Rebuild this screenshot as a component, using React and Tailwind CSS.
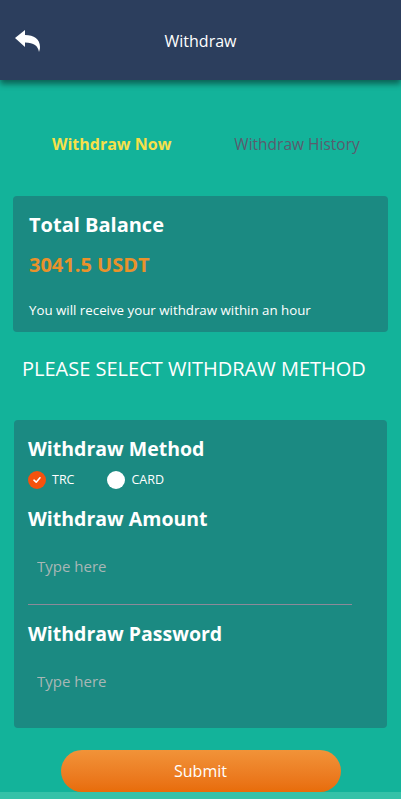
import React, { useState } from 'react';

const font = { fontFamily: '"Open Sans", "Noto Sans", sans-serif' };

function BackIcon() {
  return (
    <svg width="26" height="22" viewBox="0 0 26 22">
      <path d="M0 8 L10 0 L10 5 C19 5 25 9 25 17 C25 19 24.5 20.5 24 22 C23 16 19 12.5 10 12.5 L10 17 Z" fill="white" />
    </svg>
  );
}

function Radio({ checked }) {
  if (!checked) return <span className="w-[18px] h-[18px] rounded-full bg-white" />;
  return (
    <span className="w-[18px] h-[18px] rounded-full bg-[#f5520e] flex items-center justify-center">
      <svg width="10" height="10" viewBox="0 0 10 10">
        <path d="M2 5.2 L4.2 7.2 L8 2.8" stroke="white" strokeWidth="1.6" fill="none" strokeLinecap="round" strokeLinejoin="round" />
      </svg>
    </span>
  );
}

export default function App() {
  const [method, setMethod] = useState('TRC');

  return (
    <div className="w-full min-h-[799px] bg-[#13b39a] flex flex-col" style={font}>
      {/* header */}
      <div className="relative h-[80px] bg-[#2c3e5d] shadow-[0_4px_6px_rgba(0,0,0,0.45)] flex items-center justify-center">
        <button className="absolute left-[15px] top-[30px]">
          <BackIcon />
        </button>
        <span className="text-white text-[16px] mt-[1px]">Withdraw</span>
      </div>

      {/* tabs */}
      <div className="flex items-center pt-[53px] pl-[52px] text-[16px] leading-[22px]">
        <span className="font-bold text-[#f7e04a]">Withdraw Now</span>
        <span className="ml-[63px] text-[15.5px] text-[#5b5b6e]">Withdraw History</span>
      </div>

      {/* balance card */}
      <div className="mx-[13px] mt-[41px] h-[136px] rounded-[4px] bg-[#1b8a82] px-[16px] pt-[15px]">
        <div className="text-white font-bold text-[20px] leading-[28px]">Total Balance</div>
        <div className="mt-[13px] text-[#e9922b] font-bold text-[20px] leading-[26px]">3041.5 USDT</div>
        <div className="mt-[23px] text-white text-[13.3px] leading-[18px]">You will receive your withdraw within an hour</div>
      </div>

      <div className="mt-[24px] pl-[22px] text-white text-[20px] leading-[26px]">PLEASE SELECT WITHDRAW METHOD</div>

      {/* form card */}
      <div className="mx-[14px] mt-[38px] h-[308px] rounded-[4px] bg-[#1b8a82] px-[14px] pt-[15px]">
        <div className="text-white font-bold text-[19.5px] leading-[28px]">Withdraw Method</div>
        <div className="flex items-center mt-[7px] h-[20px]">
          <button className="flex items-center" onClick={() => setMethod('TRC')}>
            <Radio checked={method === 'TRC'} />
            <span className="ml-[6px] text-white text-[12.5px]">TRC</span>
          </button>
          <button className="flex items-center ml-[33px]" onClick={() => setMethod('CARD')}>
            <Radio checked={method === 'CARD'} />
            <span className="ml-[6px] text-white text-[12.5px]">CARD</span>
          </button>
        </div>

        <div className="mt-[15px] text-white font-bold text-[19.5px] leading-[28px]">Withdraw Amount</div>
        <input
          placeholder="Type here"
          className="mt-[18px] w-[324px] h-[54px] pl-[9px] pb-[24px] bg-transparent text-white text-[15px] placeholder:text-[#a9b7b6] outline-none border-b border-[#8c8a99]"
        />

        <div className="mt-[15px] text-white font-bold text-[19.5px] leading-[28px]">Withdraw Password</div>
        <input
          type="password"
          placeholder="Type here"
          className="mt-[18px] w-[324px] h-[54px] pl-[9px] pb-[24px] bg-transparent text-white text-[15px] placeholder:text-[#a9b7b6] outline-none"
        />
      </div>

      {/* submit */}
      <div className="flex justify-center mt-[22px]">
        <button className="w-[280px] h-[42px] rounded-full bg-gradient-to-b from-[#f19338] to-[#e86c08] text-white text-[16px]">
          Submit
        </button>
      </div>
      <div className="h-[8px] bg-[#35c2a8]" />
    </div>
  );
}
